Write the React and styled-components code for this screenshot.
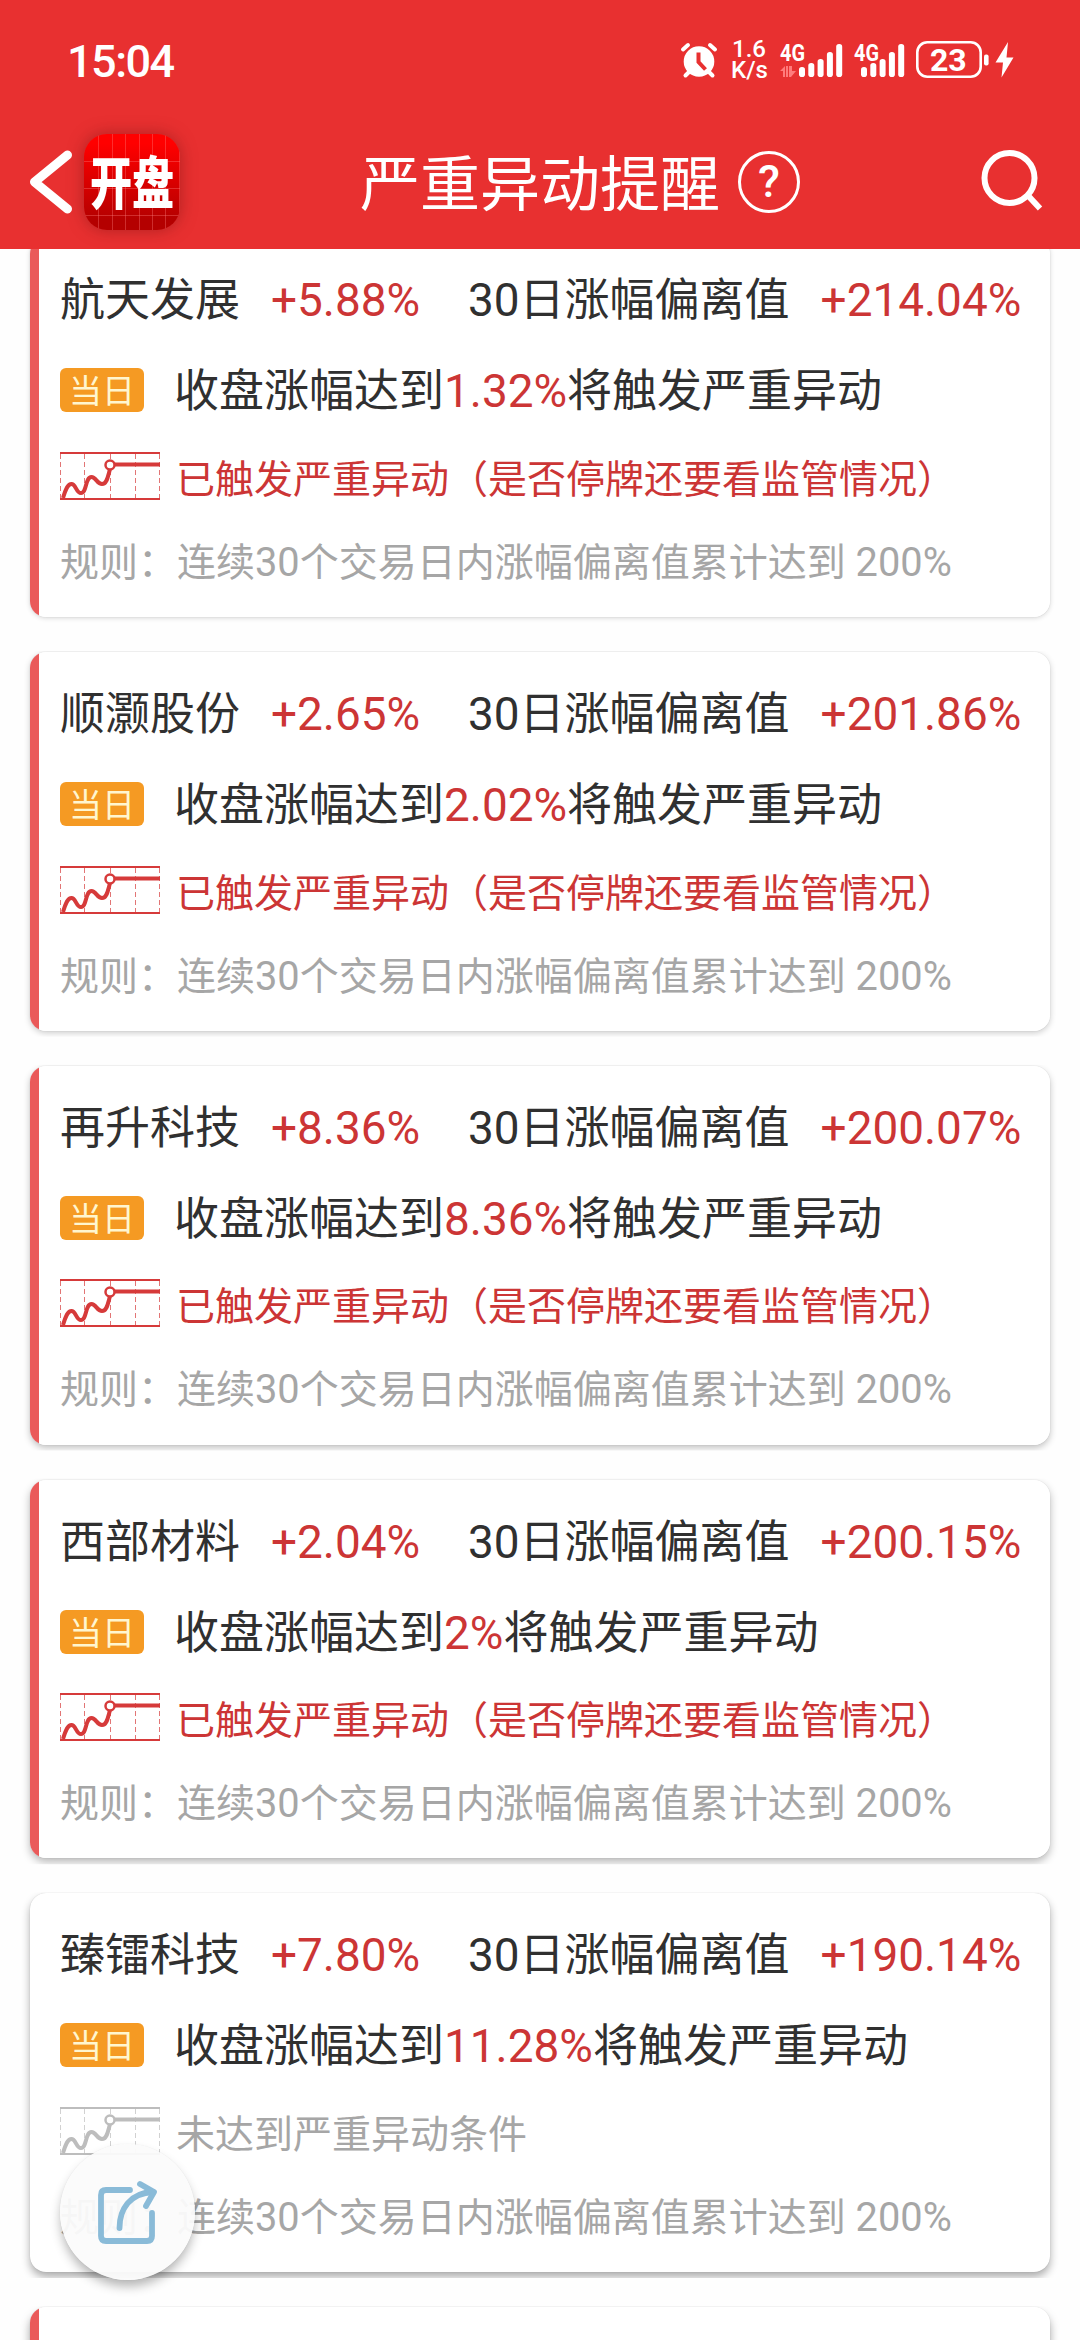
import React from 'react';
import styled, {createGlobalStyle} from 'styled-components';

const GlobalStyle = createGlobalStyle`
  * {
    box-sizing: border-box;
  }
  body {
    margin: 0;
    background: #fefefe;
    font-family: "Noto Sans CJK SC", "Noto Sans", sans-serif;
    color: #303030;
  }
`;

const Page = styled.div`
  position: relative;
  width: 1080px;
  height: 2340px;
  overflow: hidden;
  display: flex;
  flex-direction: column;
`;

const Header = styled.header`
  position: relative;
  z-index: 1;
  flex: none;
  height: 249px;
  background: #e83030;
  color: #fff;
`;

const StatusBar = styled.div`
  display: flex;
  align-items: center;
  justify-content: space-between;
  height: 120px;
  padding: 0 65px 0 67px;
  font-family: Roboto, sans-serif;
`;

const Clock = styled.div`
  font-size: 45px;
  font-weight: 500;
  letter-spacing: -1.5px;
  line-height: 52px;
  padding-top: 3px;
`;

const StatusIcons = styled.div`
  display: flex;
  align-items: center;
  height: 44px;
  svg {
    overflow: visible;
  }
`;

const NetSpeed = styled.div`
  width: 36px;
  margin: 0 13px 0 14px;
  text-align: center;
  font-size: 24px;
  font-weight: 500;
  line-height: 21.5px;
`;

const TitleBar = styled.div`
  display: flex;
  align-items: center;
  height: 124px;
  padding: 0 36px 0 28px;
`;

const AppLogo = styled.div`
  display: flex;
  align-items: center;
  justify-content: center;
  width: 96px;
  height: 96px;
  margin-left: 8px;
  border-radius: 23px;
  overflow: hidden;
  background:
    repeating-linear-gradient(90deg, transparent 0 12.4px, rgba(255, 130, 130, .35) 12.4px 13.4px) 2px 0,
    repeating-linear-gradient(180deg, transparent 0 12.6px, rgba(255, 130, 130, .35) 12.6px 13.5px) 0 1px,
    linear-gradient(#ff0000 10%, #b40000 90%);
  box-shadow: 0 0 16px rgba(120, 20, 20, .5);
  span {
    flex: none;
    margin-top: -5px;
    font-size: 54px;
    font-weight: 900;
    line-height: 96px;
    transform: scale(.78, 1.05);
  }
`;

const Title = styled.h1`
  display: flex;
  align-items: center;
  margin: 0 auto 0 180px;
  font-size: 60px;
  font-weight: 400;
  line-height: 80px;
`;

const TitleText = styled.span`
  padding-bottom: 5px;
`;

const Help = styled.span`
  display: flex;
  align-items: center;
  justify-content: center;
  width: 62px;
  height: 62px;
  margin-left: 18px;
  border: 3px solid #fff;
  border-radius: 50%;
  font-family: Roboto, sans-serif;
  font-size: 45px;
  font-weight: 500;
  line-height: 56px;
`;

const List = styled.main`
  display: flex;
  flex-direction: column;
  gap: 35px;
  margin-top: -10.75px;
  padding: 0 30px;
`;

const Card = styled.section`
  flex: none;
  height: 378.75px;
  border-radius: 16px;
  background: ${({$hit}) => $hit ? 'linear-gradient(90deg, #ea5a5a 9px, #fff 9px)' : '#fff'};
  padding: 27.5px 0 0 30px;
  box-shadow: 0 0 1px rgba(0, 0, 0, .2), 0 ${({$depth}) => 1 + $depth}px ${({$depth}) => 5 + $depth}px rgba(0, 0, 0, ${({$depth}) => .16 + $depth * .04});
  clip-path: inset(-1px -12px -6px -12px);
`;

const Row = styled.div`
  display: flex;
  align-items: center;
  white-space: nowrap;
  height: ${({$height}) => $height}px;
  font-size: ${({$small}) => $small ? 39 : 45}px;
  color: ${({$tone}) => $tone || '#303030'};
`;

const Num = styled.span`
  font-family: Roboto, sans-serif;
  font-size: 1.02em;
  color: ${({$red}) => $red ? '#cc3535' : 'inherit'};
`;

const Name = styled.div`
  width: 211px;
`;

const Change = styled.div`
  width: 197px;
`;

const Total = styled.div`
  margin-left: 31px;
`;

const Badge = styled.div`
  width: 84px;
  height: 44px;
  margin: 5px 30px 0 0;
  border-radius: 6px;
  background: #f59a23;
  color: #fff6cf;
  font-size: 33px;
  line-height: 42px;
  text-align: center;
`;

const ChartIcon = styled.svg`
  width: 100px;
  height: 48px;
  margin-right: 16px;
`;

const ShareButton = styled.button`
  position: absolute;
  left: 60px;
  top: 2144px;
  width: 135px;
  height: 136px;
  padding: 0;
  border: 0;
  border-radius: 50%;
  background: rgba(251, 251, 251, .94);
  box-shadow: 0 0 1px rgba(0, 0, 0, .12), 0 7px 11px -1px rgba(0, 0, 0, .3);
`;

const stocks = [
  {name: '航天发展', change: '+5.88%', total: '+214.04%', need: '1.32%', hit: true},
  {name: '顺灏股份', change: '+2.65%', total: '+201.86%', need: '2.02%', hit: true},
  {name: '再升科技', change: '+8.36%', total: '+200.07%', need: '8.36%', hit: true},
  {name: '西部材料', change: '+2.04%', total: '+200.15%', need: '2%', hit: true},
  {name: '臻镭科技', change: '+7.80%', total: '+190.14%', need: '11.28%', hit: false},
];

const Alarm = () => (
    <svg width="36" height="36" viewBox="0 0 36 36" fill="none">
      <circle cx="18" cy="19.5" r="15.3" fill="#fff"/>
      <path d="M2 7.5L7 3M34 7.5L29 3M8 30l-3.5 3.5M28 30l3.5 3.5" stroke="#fff" strokeWidth="4" strokeLinecap="round"/>
      <path d="M17.5 10.5v9.5l7 7.5" stroke="#e83030" strokeWidth="4"/>
    </svg>
);

const Signal = ({arrows}) => {
  const start = arrows ? 19 : 7;
  const width = arrows ? 63 : 51;
  return (
      <svg width={width} height="36" viewBox={`0 0 ${width} 36`} fill="#fff">
        <text x="0" y="19" fontSize="24" fontWeight="700" fontFamily="Roboto, sans-serif" textLength="25" lengthAdjust="spacingAndGlyphs">4G</text>
        {[10, 14, 18, 25, 33].map((h, i) => (
            <rect key={h} x={start + i * 9.3} y={35 - h} width="6" height={h} rx="2.8"/>
        ))}
        {arrows && <path d="M0 29l5-5v11H3v-6zM6 24h2v11H6zM9 24h3v5h4l-5 6H9z" fill="#ff7b7b"/>}
      </svg>
  );
};

const Battery = () => (
    <svg width="99" height="40" viewBox="0 0 99 40" fill="none">
      <rect x="1.3" y="2.3" width="63.4" height="34.4" rx="10" stroke="#fff" strokeWidth="2.6"/>
      <rect x="68" y="14.5" width="4.6" height="11" rx="2" fill="#fff"/>
      <text x="32.3" y="31" fontSize="32" fontWeight="700" fontFamily="Roboto, sans-serif" textAnchor="middle" fill="#fff">23</text>
      <path d="M92 2L79.5 22.5H87L85.5 37.5 97.5 17.5H90.5z" fill="#fff"/>
    </svg>
);

const TrendChart = ({color}) => (
    <ChartIcon viewBox="0 0 100 48" fill="none" stroke={color}>
      <path d="M0 1h100M0 47h100" strokeWidth="2"/>
      <path d="M.5 2v44M24.5 2v44M50.5 2v44M75.5 2v44M99.5 2v44" strokeWidth="1" strokeDasharray="5 3" opacity=".7"/>
      <path d="M3 46C6 36 8 32 11.5 32C16 32 16 41 21 41C27 41 25 25 31.5 25C36 25 37 32 42 32C47 32 48 24 50 17" strokeWidth="4"/>
      <path d="M55 12.5h45" strokeWidth="4"/>
      <circle cx="50" cy="13" r="4.5" strokeWidth="2.5" fill="#fff"/>
    </ChartIcon>
);

const StockCard = ({stock, depth}) => {
  const {name, change, total, need, hit} = stock;
  return (
      <Card $hit={hit} $depth={depth}>
        <Row $height={62}>
          <Name>{name}</Name>
          <Change><Num $red>{change}</Num></Change>
          <div><Num>30</Num>日涨幅偏离值</div>
          <Total><Num $red>{total}</Num></Total>
        </Row>
        <Row $height={120}>
          <Badge>当日</Badge>
          <div>收盘涨幅达到<Num $red>{need}</Num>将触发严重异动</div>
        </Row>
        <Row $height={56} $small $tone={hit ? '#cc3535' : '#a6a6a6'}>
          <TrendChart color={hit ? '#d63a3a' : '#bdbdbd'}/>
          <div>{hit ? '已触发严重异动（是否停牌还要看监管情况）' : '未达到严重异动条件'}</div>
        </Row>
        <Row $height={110} $small $tone="#a6a6a6">
          <div>规则：连续<Num>30</Num>个交易日内涨幅偏离值累计达到<Num> 200%</Num></div>
        </Row>
      </Card>
  );
};

const App = () => {
  return (
      <Page>
        <GlobalStyle/>
        <Header>
          <StatusBar>
            <Clock>15:04</Clock>
            <StatusIcons>
              <Alarm/>
              <NetSpeed>1.6<br/>K/s</NetSpeed>
              <Signal arrows/>
              <svg width="11" height="1"/>
              <Signal/>
              <svg width="11" height="1"/>
              <Battery/>
            </StatusIcons>
          </StatusBar>
          <TitleBar>
            <svg width="48" height="66" viewBox="0 0 48 66" fill="none" stroke="#fff" strokeWidth="9" strokeLinecap="round" strokeLinejoin="round">
              <path d="M39.5 6L6.5 33l33 27"/>
            </svg>
            <AppLogo><span>开盘</span></AppLogo>
            <Title><TitleText>严重异动提醒</TitleText><Help>?</Help></Title>
            <svg width="64" height="64" viewBox="0 0 64 64" fill="none" stroke="#fff" strokeWidth="6">
              <circle cx="29.5" cy="28" r="25"/>
              <path d="M47.5 45L60 58.5"/>
            </svg>
          </TitleBar>
        </Header>
        <List>
          {stocks.map((stock, i) => <StockCard key={stock.name} stock={stock} depth={i}/>)}
          <Card $hit $depth={5}/>
        </List>
        <ShareButton aria-label="分享">
          <svg width="135" height="136" viewBox="0 0 135 136" fill="none" stroke="#8abbd8" strokeWidth="5.8" strokeLinecap="round" strokeLinejoin="round">
            <path d="M70 46H46q-5 0-5 5v41q0 5 5 5h41q5 0 5-5V69"/>
            <path d="M59.5 84C59.5 65 70 49 93 48"/>
            <path d="M80 40l14 8L86 62"/>
          </svg>
        </ShareButton>
      </Page>
  );
};

export default App;
